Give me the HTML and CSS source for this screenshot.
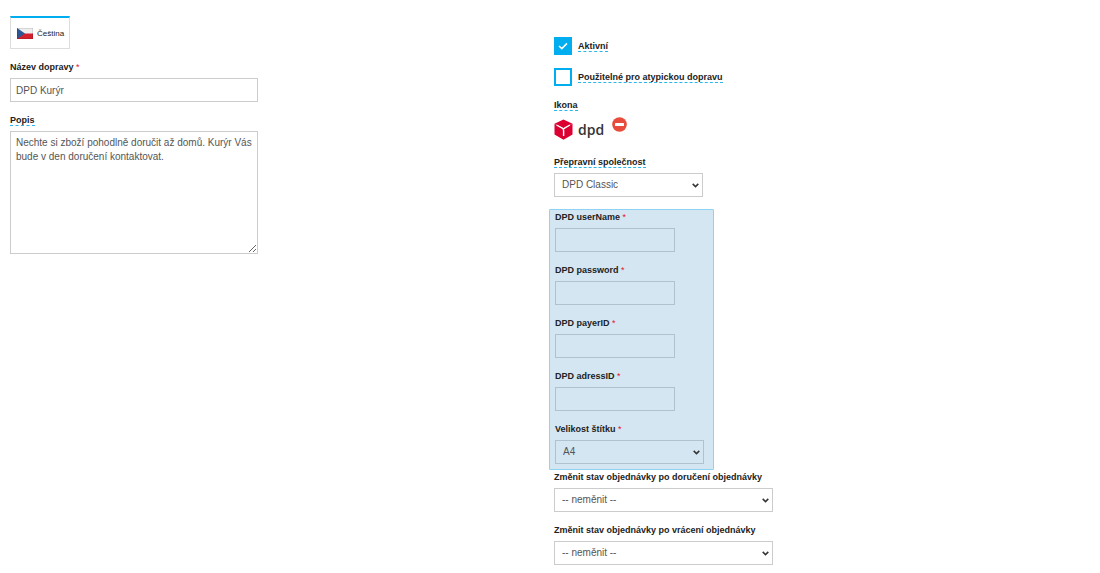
FILE: index.html
```html
<!DOCTYPE html>
<html lang="cs">
<head>
    <meta charset="UTF-8">
    <meta name="viewport" content="width=device-width, initial-scale=1.0">
    <title>DPD Kurýr</title>
    <link rel="stylesheet" href="styles.css">
</head>
<body>
    <form class="shipping-form">
        <div class="column column-texts">
            <button type="button" class="lang-tab">
                <svg class="flag" viewBox="0 0 16 11" aria-hidden="true">
                    <rect width="16" height="6" fill="#eeeeee"/>
                    <rect y="5.5" width="16" height="5.5" fill="#d3202c"/>
                    <path d="M0 0L8 5.5L0 11Z" fill="#2b5797"/>
                    <rect x="0.25" y="0.25" width="15.5" height="10.5" fill="none" stroke="#00000033" stroke-width="0.5"/>
                </svg>
                Čeština
            </button>

            <div class="field">
                <label for="name">Název dopravy <span class="required">*</span></label>
                <input type="text" class="control" id="name" value="DPD Kurýr">
            </div>

            <div class="field">
                <label for="description"><span class="hint">Popis</span></label>
                <textarea class="control" id="description">Nechte si zboží pohodlně doručit až domů. Kurýr Vás bude v den doručení kontaktovat.</textarea>
            </div>
        </div>

        <div class="column column-settings">
            <div class="check">
                <input type="checkbox" id="active" checked>
                <label for="active"><span class="hint">Aktivní</span></label>
            </div>
            <div class="check">
                <input type="checkbox" id="atypical">
                <label for="atypical"><span class="hint">Použitelné pro atypickou dopravu</span></label>
            </div>

            <div class="icon-field">
                <div class="icon-title"><span class="hint">Ikona</span></div>
                <div class="icon-row">
                    <svg class="dpd-logo" viewBox="0 0 50 22" role="img" aria-label="dpd">
                        <path d="M9.5 0.5L18.5 4.8L9.5 9.2L0.5 4.8Z" fill="#dc0032"/>
                        <path d="M0.5 4.8L9.5 9.2L18.5 4.8V15.5L9.5 20.7L0.5 15.5Z" fill="#dc0032"/>
                        <path d="M2.5 6L8.2 9.2Q9.6 10 9.6 11.5V17M9.8 10.2Q10 9.4 11 8.8L16 6" fill="none" stroke="#fff" stroke-width="1.4"/>
                        <text class="dpd-text" x="24" y="16">dpd</text>
                    </svg>
                    <button type="button" class="remove" aria-label="Odstranit ikonu">
                        <svg viewBox="0 0 15 15" aria-hidden="true">
                            <circle cx="7.5" cy="7.5" r="7.3" fill="#e74c3c"/>
                            <rect x="3" y="6" width="9" height="3" rx="0.5" fill="#fff"/>
                        </svg>
                    </button>
                </div>
            </div>

            <div class="field">
                <label for="carrier"><span class="hint">Přepravní společnost</span></label>
                <select class="control medium" id="carrier">
                    <option>DPD Classic</option>
                </select>
            </div>

            <div class="carrier-box">
                <div class="field">
                    <label for="dpd-user">DPD userName <span class="required">*</span></label>
                    <input type="text" class="control short" id="dpd-user">
                </div>
                <div class="field">
                    <label for="dpd-password">DPD password <span class="required">*</span></label>
                    <input type="text" class="control short" id="dpd-password">
                </div>
                <div class="field">
                    <label for="dpd-payer">DPD payerID <span class="required">*</span></label>
                    <input type="text" class="control short" id="dpd-payer">
                </div>
                <div class="field">
                    <label for="dpd-address">DPD adressID <span class="required">*</span></label>
                    <input type="text" class="control short" id="dpd-address">
                </div>
                <div class="field">
                    <label for="label-size">Velikost štítku <span class="required">*</span></label>
                    <select class="control medium" id="label-size">
                        <option>A4</option>
                    </select>
                </div>
            </div>

            <div class="field">
                <label for="delivered">Změnit stav objednávky po doručení objednávky</label>
                <select class="control long" id="delivered">
                    <option>-- neměnit --</option>
                </select>
            </div>
            <div class="field">
                <label for="returned">Změnit stav objednávky po vrácení objednávky</label>
                <select class="control long" id="returned">
                    <option>-- neměnit --</option>
                </select>
            </div>
        </div>
    </form>
</body>
</html>
```

FILE: styles.css
```css
/* --- General Styles --- */
* {
    margin: 0;
    padding: 0;
    box-sizing: border-box;
}

body {
    background: #fff;
    color: #222;
    font-family: "Liberation Sans", Arial, sans-serif;
    font-size: 9px;
    line-height: 14px;
}

.shipping-form {
    display: grid;
    grid-template-columns: 1fr 1fr;
}

.column-texts {
    padding: 16px 0 0 10px;
}

.column-texts .field {
    width: 46%;
}

.column-settings {
    padding: 37px 0 0 4px;
}

/* --- Language tab --- */
.lang-tab {
    display: flex;
    align-items: center;
    gap: 4px;
    height: 33px;
    margin-bottom: 11px;
    padding: 0 5px 0 6px;
    border: 1px solid #ddd;
    border-top: 2px solid #00adef;
    background: #fff;
    color: #222;
    font-family: inherit;
    font-size: 8px;
}

.flag {
    width: 16px;
    height: 11px;
}

/* --- Fields --- */
.field {
    margin-bottom: 11px;
}

.field label {
    display: block;
    margin-bottom: 4px;
    font-weight: bold;
}

.required {
    color: #e8112d;
    font-weight: normal;
}

.hint {
    border-bottom: 1px dashed #29b6ea;
}

.control {
    display: block;
    width: 100%;
    height: 24px;
    padding: 0 5px;
    border: 1px solid #ccc;
    border-radius: 0;
    background: transparent;
    color: #555;
    font-family: inherit;
    font-size: 10px;
    line-height: 14px;
}

textarea.control {
    height: 123px;
    padding: 4px 5px;
}

select.control {
    appearance: none;
    padding: 0 7px;
    background: url("data:image/svg+xml,%3Csvg xmlns='http://www.w3.org/2000/svg' width='7' height='5'%3E%3Cpath d='M0.7 0.9L3.5 3.6L6.3 0.9' fill='none' stroke='%23333' stroke-width='1.5'/%3E%3C/svg%3E") no-repeat right 3px center;
}

.short {
    width: 120px;
}

.medium {
    width: 149px;
}

.long {
    width: 219px;
}

/* --- Checkboxes --- */
.check {
    display: flex;
    align-items: center;
    gap: 6px;
    margin-bottom: 13px;
    font-weight: bold;
}

.check input {
    appearance: none;
    display: grid;
    place-items: center;
    width: 18px;
    height: 18px;
    border: 2px solid #00adef;
    background: #fff;
}

.check input:checked {
    background: #00adef url("data:image/svg+xml,%3Csvg xmlns='http://www.w3.org/2000/svg' width='10' height='8'%3E%3Cpath d='M1 4L3.8 6.6L9 1.4' fill='none' stroke='%23fff' stroke-width='1.5'/%3E%3C/svg%3E") no-repeat center;
}

/* --- Icon --- */
.icon-title {
    margin-top: -1px;
    margin-bottom: 5px;
    font-weight: bold;
}

.icon-row {
    display: flex;
    align-items: flex-start;
    gap: 8px;
    height: 38px;
}

.dpd-logo {
    width: 50px;
    height: 22px;
    margin-top: 2px;
}

.dpd-text {
    fill: #333;
    font-family: "Open Sans", sans-serif;
    font-size: 14px;
    font-weight: 600;
}

.remove {
    width: 15px;
    height: 15px;
    border: none;
    background: none;
}

.remove svg {
    display: block;
}

/* --- Carrier settings --- */
.carrier-box {
    width: fit-content;
    margin: 12px 0 0 -5px;
    padding: 0 9px 5px 5px;
    border: 1px solid #8dd3f3;
    border-radius: 1px;
    background: #d4e6f2;
}

.carrier-box .control {
    border-color: #aec2d0;
}

.carrier-box .field:last-child {
    margin-bottom: 0;
}
```
